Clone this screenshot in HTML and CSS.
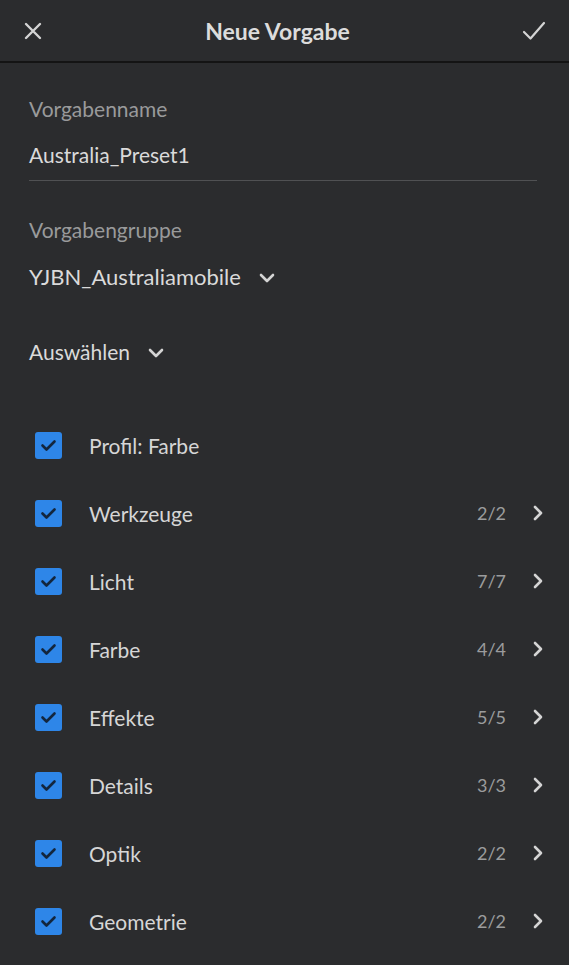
FILE: index.html
```html
<!DOCTYPE html>
<html lang="de">
<head>
  <meta charset="UTF-8">
  <title>Neue Vorgabe</title>
  <link rel="stylesheet" href="styles.css">
</head>
<body>
  <div class="header">
    <svg class="hicon" width="20" height="20" viewBox="0 0 20 20"><path d="M3 3 L17 17 M17 3 L3 17" stroke="#d4d4d4" stroke-width="2.4" stroke-linecap="round"/></svg>
    <h1>Neue Vorgabe</h1>
    <svg class="hicon" width="24" height="20" viewBox="0 0 24 20"><path d="M2 11 L8.5 17.5 L22 2" fill="none" stroke="#d4d4d4" stroke-width="2.2" stroke-linecap="round" stroke-linejoin="round"/></svg>
  </div>

  <div class="content">
    <div class="field">
      <div class="label">Vorgabenname</div>
      <div class="value underline">Australia_Preset1</div>
    </div>

    <div class="field group">
      <div class="label">Vorgabengruppe</div>
      <div class="value dropdown wide">YJBN_Australiamobile
        <svg width="18" height="12" viewBox="0 0 18 12"><path d="M3 3 L9 9 L15 3" fill="none" stroke="#d4d4d4" stroke-width="2.6" stroke-linecap="round" stroke-linejoin="round"/></svg>
      </div>
    </div>

    <div class="value dropdown select">Auswählen
      <svg width="18" height="12" viewBox="0 0 18 12"><path d="M3 3 L9 9 L15 3" fill="none" stroke="#d4d4d4" stroke-width="2.6" stroke-linecap="round" stroke-linejoin="round"/></svg>
    </div>

    <div class="list">
      <div class="row"><span class="box"><svg width="27" height="27" viewBox="0 0 27 27"><path d="M7.5 13.5 L11.5 17.5 L19.5 9.5" fill="none" stroke="#13263d" stroke-width="2.6" stroke-linecap="round" stroke-linejoin="round"/></svg></span><span class="name">Profil: Farbe</span></div>
      <div class="row"><span class="box"><svg width="27" height="27" viewBox="0 0 27 27"><path d="M7.5 13.5 L11.5 17.5 L19.5 9.5" fill="none" stroke="#13263d" stroke-width="2.6" stroke-linecap="round" stroke-linejoin="round"/></svg></span><span class="name">Werkzeuge</span><span class="count">2/2</span><svg class="chev" width="12" height="18" viewBox="0 0 12 18"><path d="M3 3 L9 9 L3 15" fill="none" stroke="#d4d4d4" stroke-width="2.6" stroke-linecap="round" stroke-linejoin="round"/></svg></div>
      <div class="row"><span class="box"><svg width="27" height="27" viewBox="0 0 27 27"><path d="M7.5 13.5 L11.5 17.5 L19.5 9.5" fill="none" stroke="#13263d" stroke-width="2.6" stroke-linecap="round" stroke-linejoin="round"/></svg></span><span class="name">Licht</span><span class="count">7/7</span><svg class="chev" width="12" height="18" viewBox="0 0 12 18"><path d="M3 3 L9 9 L3 15" fill="none" stroke="#d4d4d4" stroke-width="2.6" stroke-linecap="round" stroke-linejoin="round"/></svg></div>
      <div class="row"><span class="box"><svg width="27" height="27" viewBox="0 0 27 27"><path d="M7.5 13.5 L11.5 17.5 L19.5 9.5" fill="none" stroke="#13263d" stroke-width="2.6" stroke-linecap="round" stroke-linejoin="round"/></svg></span><span class="name">Farbe</span><span class="count">4/4</span><svg class="chev" width="12" height="18" viewBox="0 0 12 18"><path d="M3 3 L9 9 L3 15" fill="none" stroke="#d4d4d4" stroke-width="2.6" stroke-linecap="round" stroke-linejoin="round"/></svg></div>
      <div class="row"><span class="box"><svg width="27" height="27" viewBox="0 0 27 27"><path d="M7.5 13.5 L11.5 17.5 L19.5 9.5" fill="none" stroke="#13263d" stroke-width="2.6" stroke-linecap="round" stroke-linejoin="round"/></svg></span><span class="name">Effekte</span><span class="count">5/5</span><svg class="chev" width="12" height="18" viewBox="0 0 12 18"><path d="M3 3 L9 9 L3 15" fill="none" stroke="#d4d4d4" stroke-width="2.6" stroke-linecap="round" stroke-linejoin="round"/></svg></div>
      <div class="row"><span class="box"><svg width="27" height="27" viewBox="0 0 27 27"><path d="M7.5 13.5 L11.5 17.5 L19.5 9.5" fill="none" stroke="#13263d" stroke-width="2.6" stroke-linecap="round" stroke-linejoin="round"/></svg></span><span class="name">Details</span><span class="count">3/3</span><svg class="chev" width="12" height="18" viewBox="0 0 12 18"><path d="M3 3 L9 9 L3 15" fill="none" stroke="#d4d4d4" stroke-width="2.6" stroke-linecap="round" stroke-linejoin="round"/></svg></div>
      <div class="row"><span class="box"><svg width="27" height="27" viewBox="0 0 27 27"><path d="M7.5 13.5 L11.5 17.5 L19.5 9.5" fill="none" stroke="#13263d" stroke-width="2.6" stroke-linecap="round" stroke-linejoin="round"/></svg></span><span class="name">Optik</span><span class="count">2/2</span><svg class="chev" width="12" height="18" viewBox="0 0 12 18"><path d="M3 3 L9 9 L3 15" fill="none" stroke="#d4d4d4" stroke-width="2.6" stroke-linecap="round" stroke-linejoin="round"/></svg></div>
      <div class="row"><span class="box"><svg width="27" height="27" viewBox="0 0 27 27"><path d="M7.5 13.5 L11.5 17.5 L19.5 9.5" fill="none" stroke="#13263d" stroke-width="2.6" stroke-linecap="round" stroke-linejoin="round"/></svg></span><span class="name">Geometrie</span><span class="count">2/2</span><svg class="chev" width="12" height="18" viewBox="0 0 12 18"><path d="M3 3 L9 9 L3 15" fill="none" stroke="#d4d4d4" stroke-width="2.6" stroke-linecap="round" stroke-linejoin="round"/></svg></div>
    </div>
  </div>
</body>
</html>
```

FILE: styles.css
```css
body {
  margin: 0;
  background-color: #2b2c2e;
  color: #d6d6d6;
  font-family: Lato, "Open Sans", sans-serif;
  width: 569px;
  height: 965px;
  overflow: hidden;
}
.header {
  height: 61px;
  display: flex;
  align-items: center;
  justify-content: space-between;
  padding: 0 23px 0 23px;
  border-bottom: 2px solid #141414;
}
.header h1 {
  margin: 0;
  font-size: 23px;
  font-weight: bold;
  color: #dcdcdc;
  padding-right: 10px;
}
.content {
  padding: 0 32px 0 29px;
}
.field {
  padding-top: 32px;
}
.field.group {
  padding-top: 35px;
}
.label {
  font-size: 21px;
  color: #999a9b;
  line-height: 28px;
}
.value {
  font-size: 21px;
  color: #dadada;
  line-height: 30px;
  margin-top: 17px;
}
.wide {
  font-size: 22px;
  gap: 20px;
  margin-top: 18px;
}
.underline {
  padding-bottom: 10px;
  border-bottom: 1px solid #505153;
}
.dropdown {
  display: flex;
  align-items: center;
  gap: 17px;
}
.dropdown svg {
  margin-top: 2px;
}
.select {
  margin-top: 45px;
}
.list {
  margin-top: 44px;
}
.row {
  height: 68px;
  display: flex;
  align-items: center;
  font-size: 21px;
}
.box {
  width: 27px;
  height: 27px;
  margin-left: 6px;
  background-color: #2e86e8;
  border-radius: 3px;
  display: flex;
}
.name {
  margin-left: 27px;
  flex: 1;
  color: #d6d6d6;
}
.count {
  font-size: 18px;
  color: #9b9c9d;
  margin-right: 26px;
}
.chev {
  margin-right: -7px;
}
```
